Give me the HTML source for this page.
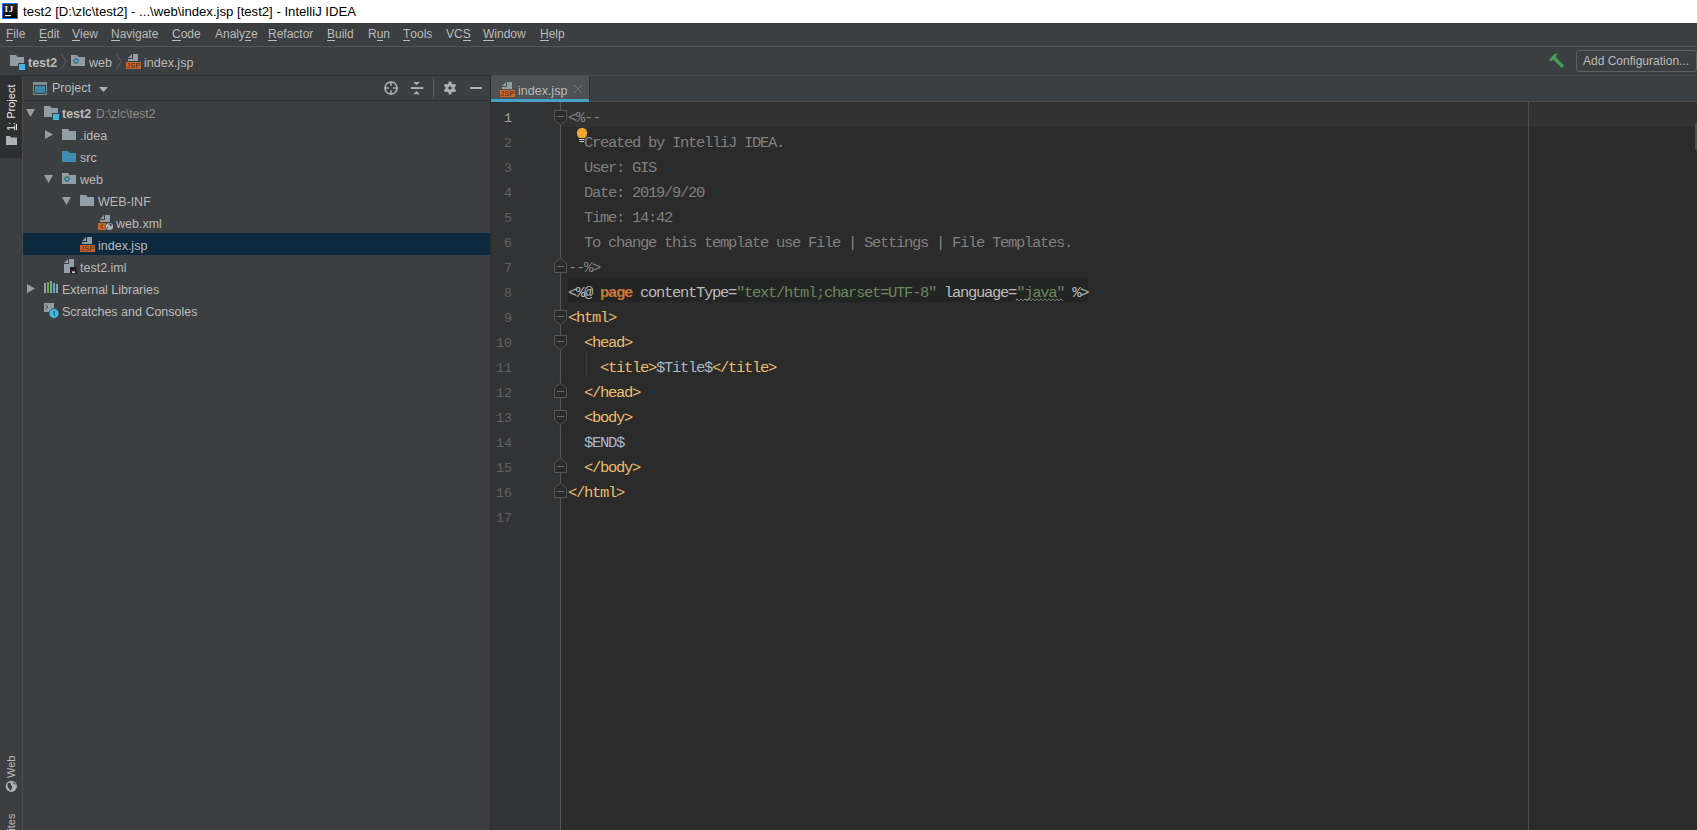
<!DOCTYPE html><html><head><meta charset="utf-8"><style>
*{margin:0;padding:0;box-sizing:border-box}
html,body{width:1697px;height:830px;overflow:hidden;background:#3C3F41;font-family:"Liberation Sans",sans-serif;position:relative}
.a{position:absolute}
.t{position:absolute;white-space:pre;line-height:1}
.mi{position:absolute;font-size:12px;color:#BBBBBB;white-space:pre;line-height:1}
.mi u{text-decoration:none;border-bottom:1px solid #BBBBBB;display:inline-block;line-height:1}
.tx{position:absolute;font-size:12.5px;color:#BBBBBB;white-space:pre;line-height:1}
.code{position:absolute;font-family:"Liberation Mono",monospace;font-size:13.33px;white-space:pre;line-height:1;color:#A9B7C6}
.ln{position:absolute;font-family:"Liberation Mono",monospace;font-size:13.33px;white-space:pre;color:#606366;line-height:1}
svg{position:absolute;overflow:visible}
</style></head><body>
<div class="a" style="left:0;top:0;width:1697px;height:23px;background:#FFFFFF"></div>
<div class="a" style="left:2px;top:3px;width:16px;height:16px;background:#1A75FF"></div>
<div class="a" style="left:3px;top:4px;width:14px;height:14px;background:linear-gradient(#2a2a2a,#000)"></div>
<svg style="left:0;top:0" width="20" height="20" viewBox="0 0 20 20"><text x="4.6" y="12.2" font-family="Liberation Serif" font-weight="bold" font-size="9" fill="#F4F4F4" letter-spacing="0.6">IJ</text><rect x="5" y="15" width="6" height="1.2" fill="#F4F4F4"/></svg>
<div class="t" style="left:23px;top:5px;font-size:13.15px;color:#000">test2 [D:\zlc\test2] - ...\web\index.jsp [test2] - IntelliJ IDEA</div>
<div class="a" style="left:0;top:23px;width:1697px;height:23px;background:#3C3F41"></div>
<div class="mi" style="left:6px;top:28px"><u>F</u>ile</div>
<div class="mi" style="left:39px;top:28px"><u>E</u>dit</div>
<div class="mi" style="left:72px;top:28px"><u>V</u>iew</div>
<div class="mi" style="left:111px;top:28px"><u>N</u>avigate</div>
<div class="mi" style="left:172px;top:28px"><u>C</u>ode</div>
<div class="mi" style="left:215px;top:28px">Analy<u>z</u>e</div>
<div class="mi" style="left:268px;top:28px"><u>R</u>efactor</div>
<div class="mi" style="left:327px;top:28px"><u>B</u>uild</div>
<div class="mi" style="left:368px;top:28px">R<u>u</u>n</div>
<div class="mi" style="left:403px;top:28px"><u>T</u>ools</div>
<div class="mi" style="left:446px;top:28px">VC<u>S</u></div>
<div class="mi" style="left:483px;top:28px"><u>W</u>indow</div>
<div class="mi" style="left:540px;top:28px"><u>H</u>elp</div>
<div class="a" style="left:0;top:46px;width:1697px;height:1px;background:#515658"></div>
<svg style="left:10px;top:55px" width="14" height="11" viewBox="0 0 14 11"><path d="M0,0 H6 L7.5,2 H14 V11 H0 Z" fill="#919EA6"/><rect x="8" y="8" width="7" height="7" fill="#3C3F41"/><rect x="9" y="9" width="6" height="6" fill="#40B6E0"/></svg>
<div class="tx" style="left:28px;top:57px;font-weight:bold;font-size:12.5px">test2</div>
<svg style="left:61px;top:54px" width="6" height="15" viewBox="0 0 6 15"><path d="M0.5,0 L5,7.5 L0.5,15" fill="none" stroke="#5E6060" stroke-width="1"/></svg>
<svg style="left:71px;top:55px" width="14" height="11" viewBox="0 0 14 11"><path d="M0,0 H6 L7.5,2 H14 V11 H0 Z" fill="#919EA6"/><circle cx="5" cy="6" r="2.2" fill="#40B6E0" stroke="#2E3133" stroke-width="0.8"/></svg>
<div class="tx" style="left:89px;top:57px">web</div>
<svg style="left:116px;top:54px" width="6" height="15" viewBox="0 0 6 15"><path d="M0.5,0 L5,7.5 L0.5,15" fill="none" stroke="#5E6060" stroke-width="1"/></svg>
<svg style="left:126px;top:54px" width="15" height="15" viewBox="0 0 15 15"><path d="M2,4 L6,0 V4 Z" fill="#919EA6"/><path d="M7,0 H12 V7 H2 V5 H7 Z" fill="#919EA6"/><rect x="0" y="8" width="15" height="7" fill="#C8662C"/><text x="7.5" y="14.2" font-family="Liberation Sans" font-size="7.5" fill="#3A2A20" text-anchor="middle" letter-spacing="0.2">JSP</text></svg>
<div class="tx" style="left:144px;top:57px">index.jsp</div>
<svg style="left:1540px;top:48px" width="40" height="26" viewBox="0 0 40 26"><path d="M9,11.8 L14.6,5.7 L18.2,5.7 L15.4,8.8 L24.2,17.4 L21.7,20 L13.2,11.4 L11.2,13.6 Z" fill="#499C54"/></svg>
<div class="a" style="left:1576px;top:50px;width:121px;height:22px;border:1px solid #5E6060;border-radius:3px;background:#3C3F41"></div>
<div class="tx" style="left:1583px;top:55px;font-size:12px">Add Configuration...</div>
<div class="a" style="left:0;top:75px;width:491px;height:1px;background:#323232"></div>
<div class="a" style="left:491px;top:75px;width:1206px;height:1px;background:#4B4B4B"></div>
<div class="a" style="left:0;top:76px;width:22px;height:754px;background:#3C3F41"></div>
<div class="a" style="left:0;top:76px;width:22px;height:82px;background:#2E2F30"></div>
<div class="a" style="left:22px;top:76px;width:1px;height:754px;background:#4B4B4B"></div>
<div class="t" style="left:6px;top:131px;font-size:11px;color:#E8E8E8;transform:rotate(-90deg);transform-origin:0 0;">1: Project</div>
<div class="a" style="left:16px;top:124px;width:1px;height:6px;background:#E8E8E8"></div>
<svg style="left:6px;top:136px" width="11" height="9" viewBox="0 0 11 9"><path d="M0,0 H4 L5,1.5 H11 V9 H0 Z" fill="#AFB1B3"/></svg>
<div class="t" style="left:6px;top:777.5px;font-size:11px;color:#BBBBBB;transform:rotate(-90deg);transform-origin:0 0;">Web</div>
<svg style="left:5px;top:780px" width="13" height="13" viewBox="0 0 13 13"><circle cx="6.3" cy="6.3" r="5.6" fill="#AFB1B3"/><path d="M2.5,3.5 Q4.5,2 6,3.2 Q5.2,5 6.8,6 Q7.8,7.5 6.3,9.5 Q5.5,11 4.8,10.5 Q4.5,8.5 3.2,7.8 Q2.2,6 2.5,3.5 Z M8.2,2 Q10,2.8 10.8,4.5 Q9.5,4.8 8.6,3.8 Z" fill="#3C3F41"/></svg>
<div class="t" style="left:6px;top:871px;font-size:11px;color:#BBBBBB;transform:rotate(-90deg);transform-origin:0 0;">2: Favorites</div>
<div class="a" style="left:23px;top:76px;width:467px;height:754px;background:#3C3F41"></div>
<div class="a" style="left:23px;top:100px;width:467px;height:1px;background:#323232"></div>
<div class="a" style="left:490px;top:75px;width:1px;height:755px;background:#2B2B2B"></div>
<svg style="left:33px;top:82px" width="14" height="13" viewBox="0 0 14 13"><rect x="0.5" y="0.5" width="13" height="12" fill="none" stroke="#7F8B91"/><rect x="0" y="0" width="14" height="3" fill="#7F8B91"/><rect x="2" y="4" width="10" height="7" fill="#3A89A8"/></svg>
<div class="tx" style="left:52px;top:82px">Project</div>
<svg style="left:99px;top:87px" width="9" height="5" viewBox="0 0 9 5"><path d="M0,0 H9 L4.5,5 Z" fill="#AFB1B3"/></svg>
<svg style="left:384px;top:81px" width="14" height="14" viewBox="0 0 14 14"><circle cx="7" cy="7" r="6.1" fill="none" stroke="#AFB1B3" stroke-width="1.5"/><path d="M7,0.5 V4.8 M7,9.2 V13.5 M0.5,7 H4.8 M9.2,7 H13.5" stroke="#AFB1B3" stroke-width="1.5"/></svg>
<svg style="left:410px;top:81px" width="14" height="14" viewBox="0 0 14 14"><rect x="0.7" y="6.1" width="12.6" height="1.9" fill="#AFB1B3"/><path d="M3.3,1 H9.8 L6.55,4.2 Z M3.3,13.2 H9.8 L6.55,10 Z" fill="#AFB1B3"/></svg>
<div class="a" style="left:433px;top:78px;width:1px;height:20px;background:#5A5D5F"></div>
<svg style="left:443px;top:81px" width="14" height="14" viewBox="0 0 14 14"><g fill="#AFB1B3"><circle cx="7" cy="7" r="4.6"/><rect x="5.6" y="0.6" width="2.8" height="3" rx="0.6"/><rect x="5.6" y="10.4" width="2.8" height="3" rx="0.6"/><rect x="5.6" y="0.6" width="2.8" height="3" rx="0.6" transform="rotate(60 7 7)"/><rect x="5.6" y="0.6" width="2.8" height="3" rx="0.6" transform="rotate(120 7 7)"/><rect x="5.6" y="0.6" width="2.8" height="3" rx="0.6" transform="rotate(240 7 7)"/><rect x="5.6" y="0.6" width="2.8" height="3" rx="0.6" transform="rotate(300 7 7)"/></g><circle cx="7" cy="7" r="1.8" fill="#3C3F41"/></svg>
<div class="a" style="left:470px;top:87px;width:12px;height:2px;background:#AFB1B3"></div>
<div class="a" style="left:23px;top:233px;width:467px;height:22px;background:#0D293E"></div>
<svg style="left:26px;top:109px" width="9" height="8" viewBox="0 0 9 8"><path d="M0,0 H9 L4.5,8 Z" fill="#9A9DA0"/></svg>
<svg style="left:44px;top:106px" width="14" height="11" viewBox="0 0 14 11"><path d="M0,0 H6 L7.5,2 H14 V11 H0 Z" fill="#919EA6"/><rect x="8" y="7" width="7" height="7" fill="#3C3F41"/><rect x="9" y="8" width="6" height="6" fill="#40B6E0"/></svg>
<div class="tx" style="left:62px;top:108px;font-weight:bold">test2</div>
<div class="tx" style="left:96px;top:108px;color:#8C8C8C;font-size:12px">D:\zlc\test2</div>
<svg style="left:45px;top:130px" width="8" height="9" viewBox="0 0 8 9"><path d="M0,0 L8,4.5 L0,9 Z" fill="#9A9DA0"/></svg>
<svg style="left:62px;top:129px" width="14" height="11" viewBox="0 0 14 11"><path d="M0,0 H6 L7.5,2 H14 V11 H0 Z" fill="#919EA6"/></svg>
<div class="tx" style="left:80px;top:130px">.idea</div>
<svg style="left:62px;top:151px" width="14" height="11" viewBox="0 0 14 11"><path d="M0,0 H6 L7.5,2 H14 V11 H0 Z" fill="#3D8DAE"/></svg>
<div class="tx" style="left:80px;top:152px">src</div>
<svg style="left:44px;top:175px" width="9" height="8" viewBox="0 0 9 8"><path d="M0,0 H9 L4.5,8 Z" fill="#9A9DA0"/></svg>
<svg style="left:62px;top:173px" width="14" height="11" viewBox="0 0 14 11"><path d="M0,0 H6 L7.5,2 H14 V11 H0 Z" fill="#919EA6"/><circle cx="5" cy="6" r="2.2" fill="#40B6E0" stroke="#2E3133" stroke-width="0.8"/></svg>
<div class="tx" style="left:80px;top:174px">web</div>
<svg style="left:62px;top:197px" width="9" height="8" viewBox="0 0 9 8"><path d="M0,0 H9 L4.5,8 Z" fill="#9A9DA0"/></svg>
<svg style="left:80px;top:195px" width="14" height="11" viewBox="0 0 14 11"><path d="M0,0 H6 L7.5,2 H14 V11 H0 Z" fill="#919EA6"/></svg>
<div class="tx" style="left:98px;top:196px">WEB-INF</div>
<svg style="left:98px;top:214px" width="16" height="16" viewBox="0 0 16 16"><path d="M2,5 L6,1 V5 Z" fill="#919EA6"/><path d="M7,1 H12 V8 H2 V6 H7 Z" fill="#919EA6"/><rect x="0" y="9" width="8" height="7" fill="#C8662C"/><path d="M5,10.3 L2.6,12.5 L5,14.7" stroke="#3A2A20" fill="none" stroke-width="1"/><circle cx="11.5" cy="12.5" r="4.1" fill="#3C3F41"/><circle cx="11.5" cy="12.5" r="3.6" fill="#A9B2B8"/><path d="M11,9.5 Q12.5,9.4 13.6,10.6 Q14,12 13.2,12.6 Q12.2,12 11.8,11.2 Q11,10.5 11,9.5 Z M9,12.8 Q10,13.2 10.3,14 L9.8,14.6 Q9,13.8 9,12.8 Z" fill="#3C3F41"/></svg>
<div class="tx" style="left:116px;top:218px">web.xml</div>
<svg style="left:80px;top:237px" width="15" height="15" viewBox="0 0 15 15"><path d="M2,4 L6,0 V4 Z" fill="#919EA6"/><path d="M7,0 H12 V7 H2 V5 H7 Z" fill="#919EA6"/><rect x="0" y="8" width="15" height="7" fill="#C8662C"/><text x="7.5" y="14.2" font-family="Liberation Sans" font-size="7.5" fill="#3A2A20" text-anchor="middle" letter-spacing="0.2">JSP</text></svg>
<div class="tx" style="left:98px;top:240px">index.jsp</div>
<svg style="left:64px;top:259px" width="13" height="15" viewBox="0 0 13 15"><path d="M0,4 L4,0 V4 Z" fill="#919EA6"/><path d="M5,0 H10 V14 H0 V5 H5 Z" fill="#919EA6"/><rect x="6" y="8" width="7" height="7" fill="#231F20"/><rect x="8" y="12.5" width="3" height="1.3" fill="#fff"/></svg>
<div class="tx" style="left:80px;top:262px">test2.iml</div>
<svg style="left:27px;top:284px" width="8" height="9" viewBox="0 0 8 9"><path d="M0,0 L8,4.5 L0,9 Z" fill="#9A9DA0"/></svg>
<svg style="left:44px;top:281px" width="14" height="12" viewBox="0 0 14 12"><rect x="0" y="2" width="2" height="10" fill="#919EA6"/><rect x="3" y="1" width="2" height="11" fill="#62B543"/><rect x="6" y="0" width="2" height="12" fill="#919EA6"/><rect x="9" y="2" width="2" height="10" fill="#40B6E0"/><rect x="12" y="3" width="2" height="9" fill="#919EA6"/></svg>
<div class="tx" style="left:62px;top:284px">External Libraries</div>
<svg style="left:44px;top:303px" width="16" height="16" viewBox="0 0 16 16"><rect x="0" y="0" width="10" height="9" fill="#919EA6"/><path d="M1.5,2 L4,4 L1.5,6" stroke="#3C3F41" fill="none" stroke-width="0.9"/><circle cx="10" cy="10.5" r="5" fill="#40B6E0" stroke="#3C3F41" stroke-width="0.8"/><path d="M10,8 V11 L11.5,12.5" stroke="#3C3F41" fill="none" stroke-width="1"/></svg>
<div class="tx" style="left:62px;top:306px">Scratches and Consoles</div>
<div class="a" style="left:491px;top:76px;width:1206px;height:25px;background:#3C3F41"></div>
<div class="a" style="left:491px;top:101px;width:1206px;height:1px;background:#4F4F4F"></div>
<div class="a" style="left:491px;top:76px;width:98px;height:26px;background:#4E5254"></div>
<div class="a" style="left:589px;top:76px;width:1px;height:26px;background:#323232"></div>
<div class="a" style="left:491px;top:99px;width:98px;height:3px;background:#44A2C6"></div>
<svg style="left:500px;top:82px" width="15" height="15" viewBox="0 0 15 15"><path d="M2,4 L6,0 V4 Z" fill="#919EA6"/><path d="M7,0 H12 V7 H2 V5 H7 Z" fill="#919EA6"/><rect x="0" y="8" width="15" height="7" fill="#C8662C"/><text x="7.5" y="14.2" font-family="Liberation Sans" font-size="7.5" fill="#3A2A20" text-anchor="middle" letter-spacing="0.2">JSP</text></svg>
<div class="tx" style="left:518px;top:85px">index.jsp</div>
<svg style="left:574px;top:85px" width="8" height="8" viewBox="0 0 8 8"><path d="M0,0 L8,8 M8,0 L0,8" stroke="#6E7072" stroke-width="1"/></svg>
<div class="a" style="left:491px;top:102px;width:1206px;height:728px;background:#2B2B2B"></div>
<div class="a" style="left:491px;top:102px;width:70px;height:728px;background:#313335"></div>
<div class="a" style="left:561px;top:102px;width:1136px;height:25px;background:#323232"></div>
<div class="a" style="left:1528px;top:102px;width:1px;height:728px;background:#4D4D4D"></div>
<div class="a" style="left:560px;top:102px;width:1px;height:728px;background:#555555"></div>
<div class="a" style="left:568px;top:277px;width:520px;height:25px;background:#232525"></div>
<div class="code" style="left:568px;top:111.38px;font-size:15.5px;letter-spacing:-1.3px"><span style="color:#808080;">&lt;%--</span></div>
<div class="code" style="left:584px;top:136.38px;font-size:15.5px;letter-spacing:-1.3px"><span style="color:#808080;">Created by IntelliJ IDEA.</span></div>
<div class="code" style="left:584px;top:161.38px;font-size:15.5px;letter-spacing:-1.3px"><span style="color:#808080;">User: GIS</span></div>
<div class="code" style="left:584px;top:186.38px;font-size:15.5px;letter-spacing:-1.3px"><span style="color:#808080;">Date: 2019/9/20</span></div>
<div class="code" style="left:584px;top:211.38px;font-size:15.5px;letter-spacing:-1.3px"><span style="color:#808080;">Time: 14:42</span></div>
<div class="code" style="left:584px;top:236.38px;font-size:15.5px;letter-spacing:-1.3px"><span style="color:#808080;">To change this template use File | Settings | File Templates.</span></div>
<div class="code" style="left:568px;top:261.38px;font-size:15.5px;letter-spacing:-1.3px"><span style="color:#808080;">--%&gt;</span></div>
<div class="code" style="left:568px;top:286.38px;font-size:15.5px;letter-spacing:-1.3px"><span style="color:#BBBBBB;">&lt;%@ </span><span style="color:#CC7832;font-weight:bold">page</span><span style="color:#BABABA;"> contentType=</span><span style="color:#6A8759;">"text/html;charset=UTF-8"</span><span style="color:#BABABA;"> language=</span><span style="color:#6A8759;">"java"</span><span style="color:#BBBBBB;"> %&gt;</span></div>
<div class="code" style="left:568px;top:311.38px;font-size:15.5px;letter-spacing:-1.3px"><span style="color:#E8BF6A;">&lt;html&gt;</span></div>
<div class="code" style="left:584px;top:336.38px;font-size:15.5px;letter-spacing:-1.3px"><span style="color:#E8BF6A;">&lt;head&gt;</span></div>
<div class="code" style="left:600px;top:361.38px;font-size:15.5px;letter-spacing:-1.3px"><span style="color:#E8BF6A;">&lt;title&gt;</span><span style="color:#A9B7C6;">$Title$</span><span style="color:#E8BF6A;">&lt;/title&gt;</span></div>
<div class="code" style="left:584px;top:386.38px;font-size:15.5px;letter-spacing:-1.3px"><span style="color:#E8BF6A;">&lt;/head&gt;</span></div>
<div class="code" style="left:584px;top:411.38px;font-size:15.5px;letter-spacing:-1.3px"><span style="color:#E8BF6A;">&lt;body&gt;</span></div>
<div class="code" style="left:584px;top:436.38px;font-size:15.5px;letter-spacing:-1.3px"><span style="color:#A9B7C6;">$END$</span></div>
<div class="code" style="left:584px;top:461.38px;font-size:15.5px;letter-spacing:-1.3px"><span style="color:#E8BF6A;">&lt;/body&gt;</span></div>
<div class="code" style="left:568px;top:486.38px;font-size:15.5px;letter-spacing:-1.3px"><span style="color:#E8BF6A;">&lt;/html&gt;</span></div>
<div class="ln" style="left:504.0px;top:112.00px;font-size:13.33px;color:#A4A3A3">1</div>
<div class="ln" style="left:504.0px;top:137.00px;font-size:13.33px;color:#606366">2</div>
<div class="ln" style="left:504.0px;top:162.00px;font-size:13.33px;color:#606366">3</div>
<div class="ln" style="left:504.0px;top:187.00px;font-size:13.33px;color:#606366">4</div>
<div class="ln" style="left:504.0px;top:212.00px;font-size:13.33px;color:#606366">5</div>
<div class="ln" style="left:504.0px;top:237.00px;font-size:13.33px;color:#606366">6</div>
<div class="ln" style="left:504.0px;top:262.00px;font-size:13.33px;color:#606366">7</div>
<div class="ln" style="left:504.0px;top:287.00px;font-size:13.33px;color:#606366">8</div>
<div class="ln" style="left:504.0px;top:312.00px;font-size:13.33px;color:#606366">9</div>
<div class="ln" style="left:496.0px;top:337.00px;font-size:13.33px;color:#606366">10</div>
<div class="ln" style="left:496.0px;top:362.00px;font-size:13.33px;color:#606366">11</div>
<div class="ln" style="left:496.0px;top:387.00px;font-size:13.33px;color:#606366">12</div>
<div class="ln" style="left:496.0px;top:412.00px;font-size:13.33px;color:#606366">13</div>
<div class="ln" style="left:496.0px;top:437.00px;font-size:13.33px;color:#606366">14</div>
<div class="ln" style="left:496.0px;top:462.00px;font-size:13.33px;color:#606366">15</div>
<div class="ln" style="left:496.0px;top:487.00px;font-size:13.33px;color:#606366">16</div>
<div class="ln" style="left:496.0px;top:512.00px;font-size:13.33px;color:#606366">17</div>
<svg style="left:554px;top:110px" width="13" height="16" viewBox="0 0 13 16"><path d="M0.5,0.5 H12.5 V10 L6.5,15 L0.5,10 Z" fill="#2B2B2B" stroke="#555555"/><path d="M3,6.5 H10" stroke="#6A6A6A"/></svg>
<svg style="left:554px;top:310px" width="13" height="16" viewBox="0 0 13 16"><path d="M0.5,0.5 H12.5 V10 L6.5,15 L0.5,10 Z" fill="#2B2B2B" stroke="#555555"/><path d="M3,6.5 H10" stroke="#6A6A6A"/></svg>
<svg style="left:554px;top:335px" width="13" height="16" viewBox="0 0 13 16"><path d="M0.5,0.5 H12.5 V10 L6.5,15 L0.5,10 Z" fill="#2B2B2B" stroke="#555555"/><path d="M3,6.5 H10" stroke="#6A6A6A"/></svg>
<svg style="left:554px;top:410px" width="13" height="16" viewBox="0 0 13 16"><path d="M0.5,0.5 H12.5 V10 L6.5,15 L0.5,10 Z" fill="#2B2B2B" stroke="#555555"/><path d="M3,6.5 H10" stroke="#6A6A6A"/></svg>
<svg style="left:554px;top:257px" width="13" height="16" viewBox="0 0 13 16"><path d="M0.5,15.5 H12.5 V6 L6.5,1 L0.5,6 Z" fill="#2B2B2B" stroke="#555555"/><path d="M3,9.5 H10" stroke="#6A6A6A"/></svg>
<svg style="left:554px;top:382px" width="13" height="16" viewBox="0 0 13 16"><path d="M0.5,15.5 H12.5 V6 L6.5,1 L0.5,6 Z" fill="#2B2B2B" stroke="#555555"/><path d="M3,9.5 H10" stroke="#6A6A6A"/></svg>
<svg style="left:554px;top:457px" width="13" height="16" viewBox="0 0 13 16"><path d="M0.5,15.5 H12.5 V6 L6.5,1 L0.5,6 Z" fill="#2B2B2B" stroke="#555555"/><path d="M3,9.5 H10" stroke="#6A6A6A"/></svg>
<svg style="left:554px;top:482px" width="13" height="16" viewBox="0 0 13 16"><path d="M0.5,15.5 H12.5 V6 L6.5,1 L0.5,6 Z" fill="#2B2B2B" stroke="#555555"/><path d="M3,9.5 H10" stroke="#6A6A6A"/></svg>
<div class="a" style="left:586px;top:352px;width:1px;height:24px;background:#393939"></div>
<svg style="left:576px;top:127px" width="12" height="16" viewBox="0 0 12 16"><path d="M3,11 Q0.8,8.8 0.8,6 A5.2,5.2 0 0 1 11.2,6 Q11.2,8.8 9,11 Z" fill="#F0A732"/><rect x="3" y="12" width="5.5" height="1" fill="#CFCFCF"/><rect x="3.5" y="14" width="4.5" height="1" fill="#CFCFCF"/></svg>
<svg style="left:1016px;top:298px" width="48" height="4" viewBox="0 0 48 4"><path d="M0,2.8 L1,0.8 L3,2.8 L5,0.8 L7,2.8 L9,0.8 L11,2.8 L13,0.8 L15,2.8 L17,0.8 L19,2.8 L21,0.8 L23,2.8 L25,0.8 L27,2.8 L29,0.8 L31,2.8 L33,0.8 L35,2.8 L37,0.8 L39,2.8 L41,0.8 L43,2.8 L45,0.8 L47,2.8" fill="none" stroke="#8A9A7A" stroke-width="0.9"/></svg>
<div class="a" style="left:1695px;top:122px;width:6px;height:29px;background:#4B4D4F;border-radius:3px"></div>
</body></html>
